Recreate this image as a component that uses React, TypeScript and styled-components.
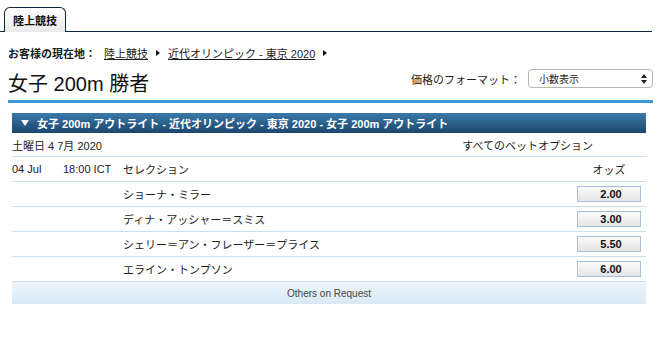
import styled, {createGlobalStyle} from "styled-components";

const GlobalStyle = createGlobalStyle`
    body {
        margin: 0;
        background: #fff;
        color: #1c1c1c;
        font-family: "Liberation Sans", Arial, "Noto Sans CJK JP", sans-serif;
        font-size: 11px;
    }
`;

const Page = styled.div`
    width: 653px;
`;

const TabBar = styled.div`
    display: flex;
    align-items: flex-end;
    height: 32px;
    width: 652px;
    padding-left: 4px;
    box-sizing: border-box;
    border-bottom: 1px solid #0e2740;
`;

const Tab = styled.div`
    height: 24px;
    margin-bottom: -1px;
    padding: 0 8px;
    display: flex;
    align-items: center;
    border: 1px solid #0e2740;
    border-bottom: none;
    border-radius: 6px 6px 0 0;
    background: linear-gradient(#ffffff, #e9e9e9);
    font-weight: bold;
    color: #111;
`;

const Content = styled.div`
    padding-left: 8px;
`;

const Breadcrumb = styled.div`
    display: flex;
    align-items: center;
    gap: 8px;
    margin-top: 14px;
    height: 14px;
    > a {
        color: #1c1c1c;
        text-decoration: underline;
    }
`;

const Arrow = styled.span`
    width: 0;
    height: 0;
    border-top: 3px solid transparent;
    border-bottom: 3px solid transparent;
    border-left: 4px solid #111;
`;

const TitleRow = styled.div`
    display: flex;
    align-items: center;
    justify-content: space-between;
    height: 40px;
    border-bottom: 3px solid #3e98da;
`;

const Title = styled.h1`
    margin: 4px 0 0;
    font-size: 20px;
    font-weight: normal;
    color: #111;
`;

const FormatBox = styled.div`
    display: flex;
    align-items: center;
    gap: 7px;
    margin-top: -3px;
`;

const Select = styled.div`
    width: 125px;
    height: 19px;
    box-sizing: border-box;
    display: flex;
    align-items: center;
    justify-content: space-between;
    padding: 0 5px 0 10px;
    border: 1px solid #b5b5b5;
    border-radius: 4px;
    background: #fff;
    font-size: 10px;
`;

const Market = styled.div`
    margin: 10px 7px 0 4px;
`;

const MarketHeader = styled.div`
    height: 20px;
    display: flex;
    align-items: center;
    gap: 8px;
    padding-left: 9px;
    background: linear-gradient(#3b79a9, #1d466f);
    color: #fff;
    font-weight: bold;
`;

const Row = styled.div`
    display: grid;
    grid-template-columns: 51px 60px 1fr 64px;
    align-items: center;
    height: 25px;
    border-bottom: 1px solid #c9dfec;
    box-sizing: border-box;
    padding-right: 5px;
`;

const DateRow = styled.div`
    display: flex;
    align-items: center;
    justify-content: space-between;
    height: 23px;
    border-bottom: 1px solid #c9dfec;
    padding-right: 53px;
`;

const Cell = styled.span<{$col?: number; $center?: boolean}>`
    grid-column: ${p => p.$col ?? "auto"};
    text-align: ${p => (p.$center ? "center" : "left")};
`;

const Odds = styled.button`
    grid-column: 4;
    height: 16px;
    width: 64px;
    padding: 0 0 0 4px;
    border: 1px solid #a8bedc;
    background: linear-gradient(#fafafa, #e5e5e5);
    font-family: inherit;
    font-size: 11px;
    font-weight: bold;
    color: #111;
    text-align: center;
`;

const Others = styled.div`
    height: 22px;
    display: flex;
    align-items: center;
    justify-content: center;
    background: linear-gradient(#eef5fb, #d9e9f5);
    color: #444;
    font-size: 10px;
`;

const runners = [
    {name: "ショーナ・ミラー", price: "2.00"},
    {name: "ディナ・アッシャー＝スミス", price: "3.00"},
    {name: "シェリー＝アン・フレーザー＝プライス", price: "5.50"},
    {name: "エライン・トンプソン", price: "6.00"},
];

const App = () => {
    return (
        <Page>
            <GlobalStyle/>
            <TabBar>
                <Tab>陸上競技</Tab>
            </TabBar>
            <Content>
                <Breadcrumb>
                    <b>お客様の現在地：</b>
                    <a>陸上競技</a>
                    <Arrow/>
                    <a>近代オリンピック - 東京 2020</a>
                    <Arrow/>
                </Breadcrumb>
                <TitleRow>
                    <Title>女子 200m 勝者</Title>
                    <FormatBox>
                        <span>価格のフォーマット：</span>
                        <Select>
                            <span>小数表示</span>
                            <svg width="6" height="10" viewBox="0 0 6 10">
                                <path d="M3 0 L6 4 H0 Z M3 10 L0 6 H6 Z" fill="#222"/>
                            </svg>
                        </Select>
                    </FormatBox>
                </TitleRow>
                <Market>
                    <MarketHeader>
                        <svg width="8" height="6" viewBox="0 0 8 6">
                            <path d="M0 0 H8 L4 6 Z" fill="#fff"/>
                        </svg>
                        <span>女子 200m アウトライト - 近代オリンピック - 東京 2020 - 女子 200m アウトライト</span>
                    </MarketHeader>
                    <DateRow>
                        <span>土曜日 4 7月 2020</span>
                        <span>すべてのベットオプション</span>
                    </DateRow>
                    <Row>
                        <Cell>04 Jul</Cell>
                        <Cell>18:00 ICT</Cell>
                        <Cell>セレクション</Cell>
                        <Cell $center>オッズ</Cell>
                    </Row>
                    {runners.map(r => (
                        <Row key={r.name}>
                            <Cell $col={3}>{r.name}</Cell>
                            <Odds>{r.price}</Odds>
                        </Row>
                    ))}
                    <Others>Others on Request</Others>
                </Market>
            </Content>
        </Page>
    );
};

export default App;
